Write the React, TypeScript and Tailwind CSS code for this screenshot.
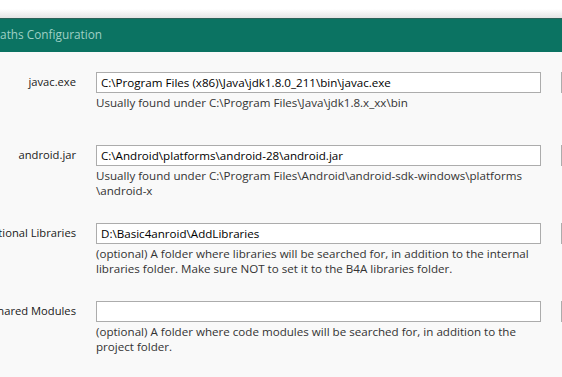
import React from "react";

const rows = [
  {
    label: "javac.exe",
    value: "C:\\Program Files (x86)\\Java\\jdk1.8.0_211\\bin\\javac.exe",
    hint: ["Usually found under C:\\Program Files\\Java\\jdk1.8.x_xx\\bin"],
    h: "h-[73px]",
  },
  {
    label: "android.jar",
    value: "C:\\Android\\platforms\\android-28\\android.jar",
    hint: ["Usually found under C:\\Program Files\\Android\\android-sdk-windows\\platforms", "\\android-x"],
    h: "h-[78px]",
  },
  {
    label: "Additional Libraries",
    value: "D:\\Basic4anroid\\AddLibraries",
    hint: [
      "(optional) A folder where libraries will be searched for, in addition to the internal",
      "libraries folder. Make sure NOT to set it to the B4A libraries folder.",
    ],
    h: "h-[78px]",
  },
  {
    label: "Shared Modules",
    value: "",
    hint: ["(optional) A folder where code modules will be searched for, in addition to the", "project folder."],
    h: "h-[78px]",
  },
];

export default function App() {
  return (
    <div className="w-[562px] h-[377px] overflow-hidden bg-[#f9f9f9] font-['Open_Sans',sans-serif] text-[11.6px] text-[#1a1a1a]">
      <div className="h-[18px] bg-gradient-to-b from-white from-50% to-[#e4e4e4]" />
      <div className="h-[34px] border-t border-[#2c6158] bg-[#0b7362] flex items-center pb-[1px]">
        <span className="ml-[-7px] text-[11.8px] text-[#9fd0c5] whitespace-nowrap">Paths Configuration</span>
      </div>
      <div className="pt-[20px]">
        {rows.map((r) => (
          <div key={r.label} className={`grid grid-cols-[76px_445px_40px] gap-x-[20px] ${r.h}`}>
            <div className="flex justify-end h-[18px] items-center">
              <span className="whitespace-nowrap leading-[15px] text-[11.2px]">{r.label}</span>
            </div>
            <div>
              <div className="h-[21px] bg-white border border-[#acacac] px-[4px] flex items-center whitespace-nowrap text-black">
                {r.value}
              </div>
              <div className="mt-[2px] leading-[15px] text-[#333]">
                {r.hint.map((l) => (
                  <div key={l} className="whitespace-nowrap">{l}</div>
                ))}
              </div>
            </div>
            <div className="h-[21px] border border-[#acacac] bg-[#f0f0f0]" />
          </div>
        ))}
      </div>
    </div>
  );
}
